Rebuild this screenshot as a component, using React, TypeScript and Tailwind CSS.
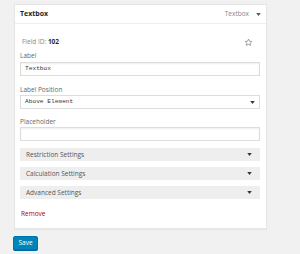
const sections = ["Restriction Settings", "Calculation Settings", "Advanced Settings"];

function Caret({ className = "" }: { className?: string }) {
  return (
    <svg viewBox="0 0 6 4" className={`h-[3px] w-[5px] ${className}`} fill="currentColor">
      <path d="M0 0h6L3 4z" />
    </svg>
  );
}

export default function App() {
  return (
    <div className="h-[254px] w-[300px] overflow-hidden bg-[#f1f1f1] pt-[4px] font-['Open_Sans',sans-serif] text-[#444]">
      <div className="ml-[14px] w-[253px] border border-[#e5e5e5] bg-white shadow-[0_1px_1px_rgba(0,0,0,0.04)]">
        <div className="flex h-[19px] items-center justify-between border-b border-[#eee] pl-[5px] pr-[5px]">
          <span className="text-[7px] font-bold text-[#23282d]">Textbox</span>
          <div className="flex items-center gap-[7px] text-[6.5px] text-[#82878c]">
            <span>Textbox</span>
            <Caret className="text-[#555]" />
          </div>
        </div>

        <div className="pb-[9px] pl-[5px] pr-[6px] pt-[12px]">
          <div className="flex h-[12px] items-center justify-between pl-[2px] pr-[7px]">
            <span className="text-[6.5px] text-[#82878c]">
              Field ID: <b className="text-[#23282d]">102</b>
            </span>
            <svg viewBox="0 0 24 24" className="h-[9px] w-[9px]" fill="none" stroke="#666" strokeWidth={1.6} strokeLinejoin="round">
              <path d="M12 3l2.7 5.6 6.1.8-4.5 4.2 1.1 6.1L12 16.8l-5.4 2.9 1.1-6.1L3.2 9.4l6.1-.8z" />
            </svg>
          </div>

          <div className="mt-[3px] text-[6.5px] leading-[10px] text-[#666]">Label</div>
          <div className="mt-[1px] flex h-[14px] items-center border border-[#ddd] px-[4px] font-['Liberation_Mono',monospace] text-[6.2px] text-[#333] shadow-[inset_0_1px_2px_rgba(0,0,0,0.07)]">
            Textbox
          </div>

          <div className="mt-[9px] text-[6.5px] leading-[10px] text-[#666]">Label Position</div>
          <div className="flex h-[14px] items-center justify-between border border-[#ddd] px-[4px] font-['Liberation_Mono',monospace] text-[6.2px] text-[#333]">
            <span>Above Element</span>
            <Caret className="text-[#333]" />
          </div>

          <div className="mt-[8px] text-[6.5px] leading-[10px] text-[#666]">Placeholder</div>
          <div className="h-[14px] border border-[#ddd] shadow-[inset_0_1px_2px_rgba(0,0,0,0.07)]" />

          <div className="mt-[7px] flex flex-col gap-[6px]">
            {sections.map((s) => (
              <div key={s} className="flex h-[13px] items-center justify-between bg-[#eee] pl-[6px] pr-[8px] text-[6.5px] text-[#555]">
                <span>{s}</span>
                <Caret className="text-[#32373c]" />
              </div>
            ))}
          </div>

          <div className="mt-[10px] pl-[1px] text-[6.5px] leading-[10px] text-[#a00]">Remove</div>
        </div>
      </div>

      <button className="ml-[13px] mt-[7px] flex h-[14px] w-[25px] items-center justify-center rounded-[2px] border border-[#0073aa] bg-[#0085ba] text-[6.5px] text-white shadow-[0_1px_0_#006799]">
        Save
      </button>
    </div>
  );
}
